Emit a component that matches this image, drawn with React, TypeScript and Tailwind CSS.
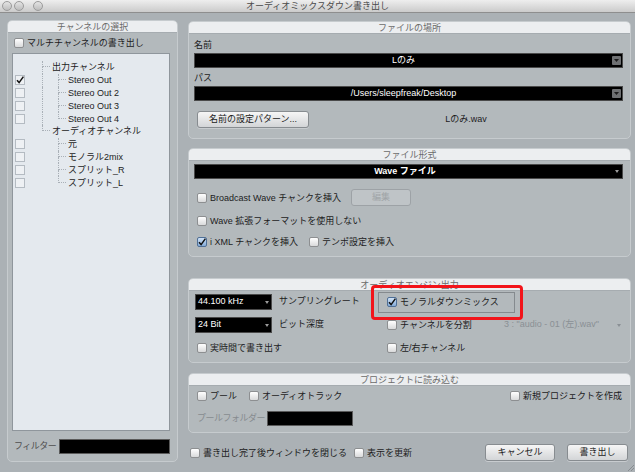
import React from 'react';
import clsx from 'clsx';

function Tick() {
  return (
    <svg width="8" height="8" viewBox="0 0 8 8">
      <path d="M1 4.2 L3.1 6.6 L7.4 0.6" stroke="#111" strokeWidth="1.5" fill="none" />
    </svg>
  );
}

function Cb({ checked = false, blue = false }: { checked?: boolean; blue?: boolean }) {
  return (
    <span
      className={clsx(
        'w-[10px] h-[10px] shrink-0 rounded-[2px] border flex items-center justify-center',
        blue
          ? 'border-[#4f6f96] bg-linear-to-b from-[#cfe2f6] to-[#84abd8]'
          : 'border-[#8d8f91] bg-linear-to-b from-white to-[#d9dadb]'
      )}
    >
      {checked && <Tick />}
    </span>
  );
}

function Opt({ label, checked, blue, className }: { label: string; checked?: boolean; blue?: boolean; className?: string }) {
  return (
    <div className={clsx('flex items-center gap-[3px] h-[12px] whitespace-nowrap', className)}>
      <Cb checked={checked} blue={blue} />
      <span className="text-[9px] leading-[12px] text-[#1c1c1c]">{label}</span>
    </div>
  );
}

function Panel({ title, className, children }: { title: string; className?: string; children?: React.ReactNode }) {
  return (
    <div className={clsx('border border-[#c6cbce] rounded-[5px] bg-[#b3b9bc] flex flex-col shrink-0', className)}>
      <div className="h-[12px] shrink-0 bg-[#eceef0] rounded-t-[4px] border-b border-[#a6acb0] text-center text-[9px] leading-[12px] text-[#6b6b6b]">
        {title}
      </div>
      {children}
    </div>
  );
}

function Button({ children, className, disabled }: { children: React.ReactNode; className?: string; disabled?: boolean }) {
  return (
    <div
      className={clsx(
        'h-[17px] rounded-[3px] border flex items-center justify-center text-[9px] shrink-0',
        disabled
          ? 'border-[#9da2a6] bg-[#bfc4c7] text-[#9fa4a8]'
          : 'border-[#878c90] bg-linear-to-b from-[#f6f6f6] to-[#d3d5d7] text-[#222] shadow-[0_1px_0_#c8cccf]',
        className
      )}
    >
      {children}
    </div>
  );
}

function BigArrow() {
  return (
    <div className="w-[9px] h-[9px] bg-[#6f7173] rounded-[1px] flex items-center justify-center shrink-0">
      <svg width="5" height="3" viewBox="0 0 5 3">
        <path d="M0 0 H5 L2.5 3 Z" fill="#1e1e1e" />
      </svg>
    </div>
  );
}

function TinyArrow({ color = '#9a9a9a' }: { color?: string }) {
  return (
    <svg width="4" height="3" viewBox="0 0 4 3" className="shrink-0">
      <path d="M0 0 H4 L2 3 Z" fill={color} />
    </svg>
  );
}

function Conn({ last }: { last?: boolean }) {
  return (
    <div className="w-[10px] h-full flex flex-col shrink-0">
      <div className="h-1/2 w-[8px] border-l border-b border-dotted border-[#a9b0b7]" />
      {!last && <div className="h-1/2 border-l border-dotted border-[#a9b0b7]" />}
    </div>
  );
}

function ListBox({ checked }: { checked?: boolean }) {
  return (
    <span className="w-[10px] h-[10px] border border-[#b4bbc2] bg-[#eef1f4] flex items-center justify-center">
      {checked && <Tick />}
    </span>
  );
}

const tree = [
  { label: '出力チャンネル', children: [{ l: 'Stereo Out', c: true }, { l: 'Stereo Out 2' }, { l: 'Stereo Out 3' }, { l: 'Stereo Out 4' }] },
  { label: 'オーディオチャンネル', children: [{ l: '元' }, { l: 'モノラル2mix' }, { l: 'スプリット_R' }, { l: 'スプリット_L' }] },
];

function ChannelTree() {
  return (
    <div className="pt-[7px]">
      {tree.map((g, gi) => {
        const lastGroup = gi === tree.length - 1;
        return (
          <React.Fragment key={g.label}>
            <div className="flex items-center h-[12.8px]">
              <div className="w-[29px] shrink-0" />
              <Conn last={lastGroup} />
              <span className="text-[9px] leading-[12px] text-[#1c1c1c] whitespace-nowrap">{g.label}</span>
            </div>
            {g.children.map((ch, ci) => (
              <div key={ch.l} className="flex items-center h-[12.8px]">
                <div className="w-[29px] shrink-0 pl-[2px] flex items-center">
                  <ListBox checked={ch.c} />
                </div>
                <div
                  className={clsx(
                    'w-[16px] h-full shrink-0',
                    !lastGroup && 'border-l border-dotted border-[#a9b0b7]'
                  )}
                />
                <Conn last={ci === g.children.length - 1} />
                <span className="text-[9px] leading-[12px] text-[#1c1c1c] whitespace-nowrap">{ch.l}</span>
              </div>
            ))}
          </React.Fragment>
        );
      })}
    </div>
  );
}

function TrafficLight() {
  return <span className="w-[10px] h-[10px] rounded-full border border-[#9b9b9b] bg-linear-to-b from-[#e4e4e4] to-[#bdbdbd]" />;
}

export default function App() {
  return (
    <div className="w-[635px] h-[472px] overflow-hidden bg-[#abb1b5] flex flex-col font-[Liberation_Sans,Noto_Sans_CJK_JP,sans-serif] relative">
      {/* title bar */}
      <div className="h-[13px] shrink-0 bg-linear-to-b from-[#eeeeee] to-[#cbcbcb] border-b border-[#8e8e8e] flex items-center relative">
        <div className="flex items-center gap-[2px] pl-[2px]">
          <TrafficLight />
          <TrafficLight />
          <span className="w-[5px]" />
          <TrafficLight />
        </div>
        <div className="absolute inset-0 text-center text-[9px] leading-[12px] text-[#4a4a4a]">オーディオミックスダウン書き出し</div>
      </div>

      <div className="flex pl-[7px] pt-[7px]">
        {/* left panel */}
        <Panel title="チャンネルの選択" className="w-[171px] h-[442px]">
          <Opt label="マルチチャンネルの書き出し" className="mt-[4px] ml-[6px]" />
          <div className="mt-[4px] ml-[4px] w-[158px] h-[378px] border border-[#8f969c] bg-[#e4e9ee]">
            <ChannelTree />
          </div>
          <div className="mt-[8px] flex items-center h-[15px] pl-[6px]">
            <span className="w-[45px] text-[9px] text-[#4f4f4f] whitespace-nowrap tracking-[-0.5px]">フィルター</span>
            <div className="w-[111px] h-[15px] bg-black border border-[#5a5a5a]" />
          </div>
        </Panel>

        {/* right column */}
        <div className="ml-[10px] mt-[1px] w-[443px] flex flex-col">
          <Panel title="ファイルの場所" className="h-[118px]">
            <div className="pl-[5px] pr-[7px] flex flex-col">
              <div className="mt-[5px] h-[12px] text-[9px] leading-[12px] text-[#1c1c1c]">名前</div>
              <div className="mt-[2px] h-[15px] bg-black border border-[#4a4a4a] flex items-center pr-[1px]">
                <span className="flex-1 text-center text-[9px] text-white">Lのみ</span>
                <BigArrow />
              </div>
              <div className="mt-[4px] h-[12px] text-[9px] leading-[12px] text-[#1c1c1c]">パス</div>
              <div className="mt-[2px] h-[15px] bg-black border border-[#4a4a4a] flex items-center pr-[1px]">
                <span className="flex-1 text-center text-[9px] text-white">/Users/sleepfreak/Desktop</span>
                <BigArrow />
              </div>
              <div className="mt-[10px] flex items-center">
                <Button className="ml-[3px] w-[112px]">名前の設定パターン...</Button>
                <span className="flex-1 text-center text-[9px] text-[#1c1c1c]">Lのみ.wav</span>
              </div>
            </div>
          </Panel>

          <Panel title="ファイル形式" className="mt-[9px] h-[109px]">
            <div className="pl-[5px] pr-[7px] flex flex-col">
              <div className="mt-[3px] h-[15px] bg-black border border-[#4a4a4a] flex items-center pr-[3px]">
                <span className="flex-1 text-center text-[9px] font-bold text-white">Wave ファイル</span>
                <TinyArrow />
              </div>
              <div className="mt-[10px] h-[17px] flex items-center pl-[3px]">
                <Opt label="Broadcast Wave チャンクを挿入" className="w-[154px]" />
                <Button disabled className="w-[60px]">編集</Button>
              </div>
              <Opt label="Wave 拡張フォーマットを使用しない" className="mt-[9px] ml-[3px]" />
              <div className="mt-[9px] flex items-center pl-[3px]">
                <Opt label="i XML チャンクを挿入" checked blue className="w-[112px]" />
                <Opt label="テンポ設定を挿入" />
              </div>
            </div>
          </Panel>

          <Panel title="オーディオエンジン出力" className="mt-[21px] h-[85px] relative">
            <div className="pl-[6px] pr-[8px] flex flex-col">
              <div className="mt-[3px] h-[16px] flex items-center">
                <div className="w-[192px] flex items-center">
                  <div className="w-[77px] h-[16px] bg-black border border-[#4a4a4a] flex items-center px-[2px]">
                    <span className="flex-1 text-[9px] text-white">44.100 kHz</span>
                    <TinyArrow />
                  </div>
                  <span className="ml-[7px] text-[9px] text-[#1c1c1c]">サンプリングレート</span>
                </div>
                <Opt label="モノラルダウンミックス" checked blue />
              </div>
              <div className="mt-[7px] h-[16px] flex items-center">
                <div className="w-[192px] flex items-center">
                  <div className="w-[77px] h-[16px] bg-black border border-[#4a4a4a] flex items-center px-[2px]">
                    <span className="flex-1 text-[9px] text-white">24 Bit</span>
                    <TinyArrow />
                  </div>
                  <span className="ml-[7px] text-[9px] text-[#1c1c1c]">ビット深度</span>
                </div>
                <Opt label="チャンネルを分割" className="w-[117px]" />
                <span className="text-[9px] text-[#8a9095] whitespace-nowrap">3 : "audio - 01 (左).wav"</span>
                <span className="ml-auto pr-[1px]">
                  <TinyArrow color="#8a9095" />
                </span>
              </div>
              <div className="mt-[9px] flex items-center">
                <Opt label="実時間で書き出す" className="w-[192px] pl-[2px]" />
                <Opt label="左/右チャンネル" />
              </div>
            </div>
            {/* red annotation */}
            <div className="absolute left-[182px] top-[6px] w-[152px] h-[35px] border-[3px] border-[#f2141a] rounded-[4px]">
              <div className="ml-[4px] mt-[4px] w-[137px] h-[21px] border border-[#858a8e]" />
            </div>
          </Panel>

          <Panel title="プロジェクトに読み込む" className="mt-[10px] h-[60px]">
            <div className="pl-[8px] pr-[8px] flex flex-col">
              <div className="mt-[4px] flex items-center">
                <Opt label="プール" className="w-[52px]" />
                <Opt label="オーディオトラック" />
                <Opt label="新規プロジェクトを作成" className="ml-auto" />
              </div>
              <div className="mt-[9px] flex items-center h-[15px]">
                <span className="w-[70px] text-[9px] text-[#868b8f] whitespace-nowrap tracking-[-0.5px]">プールフォルダー</span>
                <div className="w-[86px] h-[15px] bg-black border border-[#5a5a5a]" />
              </div>
            </div>
          </Panel>

          <div className="mt-[11px] h-[17px] flex items-center pl-[2px] pr-[3px]">
            <Opt label="書き出し完了後ウィンドウを閉じる" className="w-[164px]" />
            <Opt label="表示を更新" />
            <Button className="ml-auto w-[70px]">キャンセル</Button>
            <Button className="ml-[12px] w-[61px]">書き出し</Button>
          </div>
        </div>
      </div>

      {/* resize grip */}
      <svg width="6" height="6" viewBox="0 0 6 6" className="absolute right-[1px] bottom-[1px]">
        <path d="M6 0 L0 6 M6 3 L3 6" stroke="#7d8387" strokeWidth="0.8" />
      </svg>
    </div>
  );
}
